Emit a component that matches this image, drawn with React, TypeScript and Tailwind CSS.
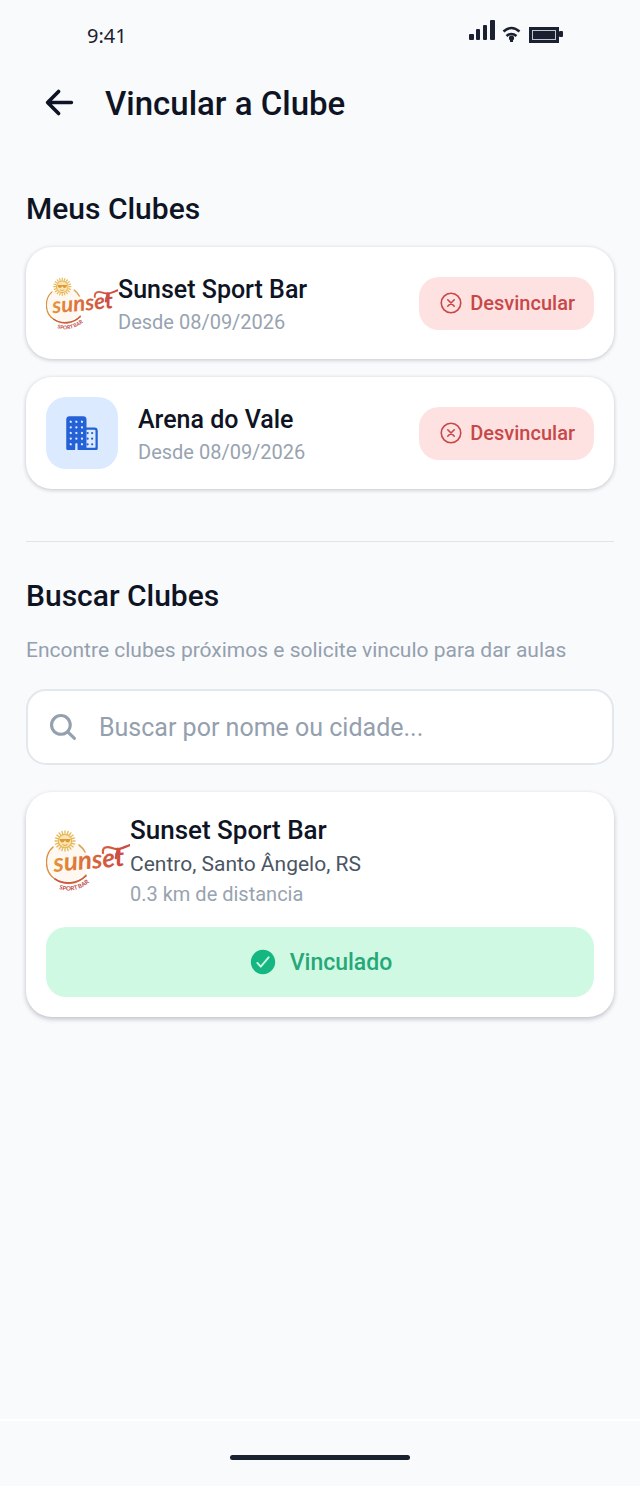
import React, { useId, useState } from 'react';
import { IoArrowBack, IoBusiness, IoCheckmarkCircle, IoCloseCircleOutline, IoSearch } from 'react-icons/io5';

const rays = Array.from({ length: 20 }, (_, i) => i * 18);

// --- Sunset Sport Bar logo ---
const SunsetLogo = ({ className }: { className: string }) => {
    const id = useId();
    const fill = `${id}-fill`;
    const curve = `${id}-curve`;

    return (
        <svg viewBox="0 0 84 84" className={className} role="img" aria-label="Sunset Sport Bar">
            <defs>
                <linearGradient id={fill} gradientUnits="userSpaceOnUse" x1="6" y1="36" x2="80" y2="48">
                    <stop offset="0" stopColor="#e39a3c" />
                    <stop offset="0.45" stopColor="#dc6f3c" />
                    <stop offset="1" stopColor="#c9483f" />
                </linearGradient>
                <path id={curve} d="M13 71 Q32 77 48 60" />
            </defs>
            <circle cx="22" cy="43" r="20" fill="#fdf3e6" opacity="0.6" />
            <g stroke="#e8b95c" strokeWidth="1.4" strokeLinecap="round">
                {rays.map((angle) => (
                    <line key={angle} x1="19" y1="15" x2="19" y2="13" transform={`rotate(${angle} 19 23)`} />
                ))}
            </g>
            <circle cx="19" cy="23" r="6.8" fill="#f9e6b4" stroke="#e8b95c" strokeWidth="1.4" />
            <path d="M13.5 21h11q-.4 3.4-2.8 3.4-1.8 0-2.7-2.2-.9 2.2-2.7 2.2-2.4 0-2.8-3.4z" fill="#df9a35" />
            <path d="M16.5 26.6q2.5 1.8 5 0" fill="none" stroke="#df9a35" strokeWidth="0.9" />
            <g fill="none" strokeLinecap="round">
                <path d="M7 29C-2 37-2 54 9 61c10 7 23 6 31-4" stroke="#dc8f45" strokeWidth="1.4" />
                <path d="M9 61c9 6 22 5 31-3" stroke="#cc5a40" strokeWidth="1.6" />
                <path d="M33 27q4 3 6 7" stroke="#d9a863" strokeWidth="1.6" />
                <path d="M57 35c-1-6 4-7 9-5 7 3 12-1 18-3" stroke={`url(#${fill})`} strokeWidth="2.2" />
                <path d="M72 31l-2 9" stroke={`url(#${fill})`} strokeWidth="2.8" />
            </g>
            <text
                x="8"
                y="54"
                transform="rotate(-5 8 54)"
                fill={`url(#${fill})`}
                className="font-['Lato',sans-serif] text-[26px] font-bold italic"
            >
                sunset
            </text>
            <text fill="#bd4a48" className="font-['Lato',sans-serif] text-[6px] font-bold">
                <textPath href={`#${curve}`}>SPORT BAR</textPath>
            </text>
        </svg>
    );
};

// --- Status bar ---
const StatusBar = () => (
    <div className="flex h-[60px] items-center justify-between pt-3 pr-[77px] pl-[87px] text-[#1b2130]">
        <span className="font-['Noto_Sans',sans-serif] text-[20px] leading-6">9:41</span>
        <svg viewBox="0 0 94 24" className="mb-2.5 h-6 w-[94px]" fill="currentColor" aria-hidden="true">
            <rect x="0" y="15" width="5" height="6" rx="1" />
            <rect x="7" y="10" width="4" height="11" rx="1" />
            <rect x="14" y="6" width="4" height="15" rx="1" />
            <rect x="21" y="1" width="5" height="20" rx="1" />
            <g fill="none" stroke="currentColor" strokeWidth="2.6">
                <path d="M34.5 12.5q8-7 16 0" />
                <path d="M37.5 17q5-4 10 0" />
            </g>
            <circle cx="42.5" cy="19" r="2.6" />
            <rect x="41" y="19" width="3" height="4" />
            <rect x="60" y="8" width="30" height="16" />
            <rect x="63.5" y="11.5" width="23" height="9" fill="none" stroke="#c3c8d0" />
            <rect x="90" y="12" width="4" height="6" rx="1" />
        </svg>
    </div>
);

// --- Linked clubs ---
type LinkedClub = { name: string; since: string; hasLogo: boolean };

const linkedClubs: LinkedClub[] = [
    { name: 'Sunset Sport Bar', since: '08/09/2026', hasLogo: true },
    { name: 'Arena do Vale', since: '08/09/2026', hasLogo: false },
];

const LinkedClubCard = ({ club }: { club: LinkedClub }) => (
    <li className="flex items-center rounded-[26px] bg-white p-5 shadow-[0_1px_4px_rgba(15,23,42,0.24)]">
        {club.hasLogo ? (
            <SunsetLogo className="size-[72px] shrink-0" />
        ) : (
            <div className="mr-5 flex size-[72px] shrink-0 items-center justify-center rounded-[20px] bg-[#dbeafe]">
                <IoBusiness className="size-9 text-[#2460d6]" />
            </div>
        )}
        <div className="min-w-0 flex-1 pt-1.5">
            <h3 className="text-[25px] leading-8 font-medium">{club.name}</h3>
            <p className="text-[20px] leading-8 text-[#98a3b0]">Desde {club.since}</p>
        </div>
        <button
            type="button"
            className="flex h-[53px] shrink-0 items-center gap-1.5 rounded-[20px] bg-[#fee2e2] px-[19px] text-[20px] font-medium text-[#c84848]"
        >
            <IoCloseCircleOutline className="size-[26px]" />
            Desvincular
        </button>
    </li>
);

export default function App() {
    const [query, setQuery] = useState('');

    return (
        <div className="flex min-h-screen flex-col bg-[#f9fafc] font-['Roboto',sans-serif] text-[#0e1424]">
            <StatusBar />

            <header className="flex h-[88px] items-center gap-[26px] pl-10">
                <button type="button" aria-label="Voltar" className="pb-1">
                    <IoArrowBack className="size-[39px]" />
                </button>
                <h1 className="text-[33px] leading-10 font-medium">Vincular a Clube</h1>
            </header>

            <main className="flex-1 px-[26px] pt-[41px]">
                <section>
                    <h2 className="text-[30px] leading-10 font-medium">Meus Clubes</h2>
                    <ul className="mt-[18px] flex flex-col gap-[18px]">
                        {linkedClubs.map((club) => (
                            <LinkedClubCard key={club.name} club={club} />
                        ))}
                    </ul>
                </section>

                <hr className="mt-[52px] border-[#dfe4ea]" />

                <section className="pt-[34px]">
                    <h2 className="text-[30px] leading-10 font-medium">Buscar Clubes</h2>
                    <p className="mt-5 text-[21px] leading-7 text-[#94a0ae]">
                        Encontre clubes próximos e solicite vinculo para dar aulas
                    </p>

                    <label className="mt-[25px] flex h-[76px] items-center gap-5 rounded-[20px] border-2 border-[#e2e8ee] bg-white px-[19px]">
                        <IoSearch className="size-8 shrink-0 text-[#94a0ae]" />
                        <input
                            type="text"
                            value={query}
                            onChange={(e) => setQuery(e.target.value)}
                            aria-label="Buscar clubes"
                            placeholder="Buscar por nome ou cidade..."
                            className="min-w-0 flex-1 pt-0.5 text-[25px] outline-none placeholder:text-[#94a0ae]"
                        />
                    </label>

                    <article className="mt-[27px] rounded-[26px] bg-white p-5 shadow-[0_2px_5px_rgba(15,23,42,0.26)]">
                        <div className="flex items-center">
                            <SunsetLogo className="size-[84px] shrink-0" />
                            <div>
                                <h3 className="text-[26px] leading-9 font-medium">Sunset Sport Bar</h3>
                                <p className="text-[21px] leading-8 text-[#4b5563]">Centro, Santo Ângelo, RS</p>
                                <p className="text-[20px] leading-7 text-[#98a3b0]">0.3 km de distancia</p>
                            </div>
                        </div>
                        <div className="mt-[19px] flex h-[70px] items-center justify-center gap-3 rounded-[20px] bg-[#d0f9e3] text-[23px] font-medium text-[#26a879]">
                            <IoCheckmarkCircle className="size-[30px] text-[#14b681]" />
                            <span className="pt-0.5">Vinculado</span>
                        </div>
                    </article>
                </section>
            </main>

            <footer className="flex h-[67px] items-center justify-center border-t-2 border-white pt-2">
                <div className="h-[5px] w-[28%] rounded-full bg-[#1b2130]" />
            </footer>
        </div>
    );
}
